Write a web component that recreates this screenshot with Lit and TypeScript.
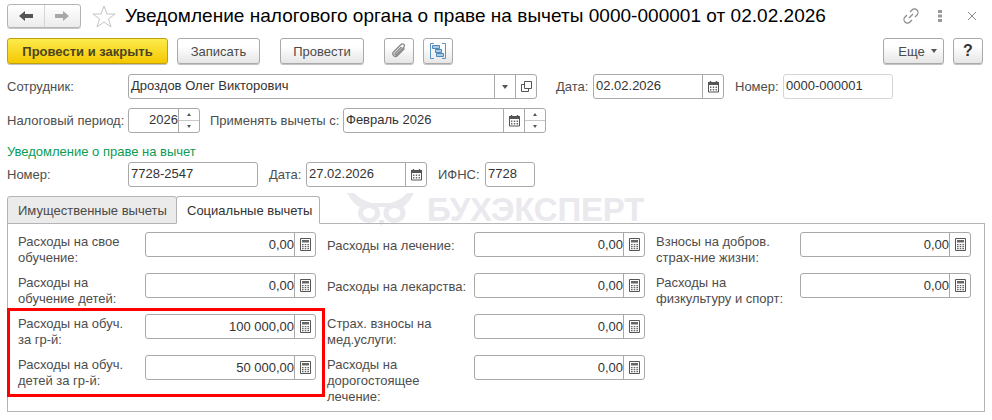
import { LitElement, html, css } from "lit";
import { customElement } from "lit/decorators.js";

const calendar = html`<svg class="ic" width="13" height="13" viewBox="0 0 13 13"><path d="M1.5 2.500h10v9.500h-10z" fill="#fff" stroke="#555"/><path d="M1 2h11v3H1z" fill="#555"/><path d="M3.500 1v2M9.500 1v2" stroke="#555" stroke-width="1.400"/><path d="M3 6.500h1.400v1.400H3zM5.800 6.500h1.400v1.400H5.800zM8.600 6.500H10v1.400H8.600zM3 9h1.400v1.400H3zM5.800 9h1.400v1.400H5.800zM8.600 9H10v1.400H8.600z" fill="#666"/></svg>`;
const calc = html`<svg class="ic" width="11" height="13" viewBox="0 0 11 13"><path d="M.5.5h10v12H.5z" fill="#fff" stroke="#555"/><path d="M2 2h7v2.500H2z" fill="#666"/><path d="M2 6h1.600v1.300H2zM4.700 6h1.600v1.300H4.700zM7.400 6H9v1.300H7.400zM2 8h1.600v1.300H2zM4.700 8h1.600v1.300H4.700zM7.400 8H9v1.300H7.400zM2 10h1.600v1.300H2zM4.700 10h1.600v1.300H4.700zM7.400 10H9v1.300H7.400z" fill="#666"/></svg>`;

const spin = html`<span class="spin"><span class="up"></span><span class="down"></span></span>`;

@customElement("app-root")
export class AppRoot extends LitElement {
  static styles = css`
    :host { display: block; width: 992px; height: 420px; background: #fff; position: relative; overflow: hidden;
      font-family: "Liberation Sans", Arial, sans-serif; font-size: 13px; color: #4d4d4d; }
    * { box-sizing: border-box; }
    .page { display: flex; flex-direction: column; padding: 4px 7px 0; position: relative; z-index: 1; }
    .head { display: flex; align-items: center; height: 24px; }
    .nav { display: flex; width: 74px; height: 24px; border: 1px solid #b4b4b4; border-radius: 3px;
      background: linear-gradient(#fff, #ececec); box-shadow: 0 1px 0 #c8c8c8; }
    .nav span { flex: 1; display: flex; align-items: center; justify-content: center; }
    .nav span + span { border-left: 1px solid #d5d5d5; }
    .star { margin-left: 11px; }
    .title { margin-left: 9px; font-size: 19px; color: #000; letter-spacing: .03px; white-space: nowrap; flex: 1; }
    .win { display: flex; align-items: center; gap: 0; }
    .win svg { display: block; }
    .bar { display: flex; margin-top: 10px; height: 26px; }
    .btn { display: flex; align-items: center; justify-content: center; height: 26px; border: 1px solid #a9a9a9; border-radius: 3px;
      background: linear-gradient(#fff 30%, #e6e6e6); box-shadow: 0 1px 0 #c4c4c4; color: #4a4a4a; white-space: nowrap; }
    .primary { width: 161px; background: linear-gradient(#fdeb4d, #f4c800); border-color: #bfa010; font-weight: bold; color: #4c4420; }
    .w83 { width: 83px; margin-left: 9px; }
    .w84 { width: 84px; margin-left: 20px; }
    .ico1 { width: 30px; margin-left: 20px; }
    .ico2 { width: 30px; margin-left: 9px; }
    .more { width: 61px; margin-left: auto; gap: 6px; padding-left: 8px; }
    .more i { border: 3px solid transparent; border-top: 4px solid #555; border-bottom: 0; display: block; }
    .help { width: 30px; margin: 0 2px 0 9px; font-weight: bold; font-size: 16px; color: #333; }
    .row { display: flex; align-items: center; height: 25px; white-space: nowrap; }
    .r1 { margin-top: 10px; }
    .r2 { margin-top: 9px; }
    .r3 { margin-top: 1px; }
    .green { margin-top: 9px; height: 19px; line-height: 19px; color: #0b9b55; }
    .lb { flex: none; }
    .field { flex: none; display: flex; height: 25px; border: 1px solid #a9a9a9; border-radius: 3px; background: #fff; color: #333; overflow: hidden; }
    .field.soft { border-color: #d4d4d4; }
    .val { flex: 1; min-width: 0; padding: 0 0 0 2px; line-height: 22px; }
    .val.right { text-align: right; }
    .seg { flex: none; width: 21px; border-left: 1px solid #a9a9a9; display: flex; align-items: center; justify-content: center; }
    .ic { display: block; }
    .tri { border: 3px solid transparent; border-top: 4px solid #555; border-bottom: 0; display: block; }
    .spin { flex: none; width: 21px; border-left: 1px solid #a9a9a9; display: flex; flex-direction: column; }
    .spin span { flex: 1; display: flex; align-items: center; justify-content: center; }
    .spin .down { border-top: 1px solid #c8c8c8; }
    .spin .up::after { content: ""; border: 2px solid transparent; border-bottom: 3px solid #555; border-top: 0; }
    .spin .down::after { content: ""; border: 2px solid transparent; border-top: 3px solid #555; border-bottom: 0; }
    .tabs { display: flex; margin-top: 9px; height: 27px; position: relative; z-index: 1; white-space: nowrap; }
    .tab { display: flex; align-items: center; height: 28px; border: 1px solid #b4b4b4; border-radius: 3px 3px 0 0; padding-left: 10px; color: #4a4a4a; }
    .tab.off { width: 170px; background: #ebebeb; }
    .tab.on { width: 144px; margin-left: -1px; background: #fff; border-bottom-color: #fff; color: #333; }
    .panel { width: 978px; height: 189px; border: 1px solid #b4b4b4; padding: 8px 0 0 10px;
      display: grid; grid-template-columns: 309px 329px 315px; }
    .col { display: grid; grid-auto-rows: 25px; row-gap: 16px; }
    .cell { display: flex; height: 25px; }
    .cell .lb { width: 127px; line-height: 16px; padding-top: 2px; white-space: nowrap; }
    .cell.c2 .lb { width: 147px; }
    .cell.c3 .lb { width: 144px; }
    .cell .lb.one { line-height: 27px; padding-top: 0; }
    .cell .field { width: 171px; }
    .cell .val { line-height: 24px; }
    .redbox { position: absolute; left: 7px; top: 308px; width: 318px; height: 89px; border: 3px solid #f00; z-index: 3; pointer-events: none; }
    .mark { position: absolute; left: 347px; top: 193px; height: 33px; display: flex; align-items: center; gap: 13px; color: #e9e9ee; font-weight: bold; font-size: 33px; letter-spacing: -.2px; line-height: 33px; z-index: 0; }
  `;

  private field(value: string, width: number, segs: unknown = "", opts: { right?: boolean; soft?: boolean } = {}) {
    return html`<div class="field ${opts.soft ? "soft" : ""}" style="width:${width}px"><span class="val ${opts.right ? "right" : ""}">${value}</span>${segs}</div>`;
  }

  private money(label: unknown, value: string, one = false, cls = "") {
    return html`<div class="cell ${cls}"><span class="lb ${one ? "one" : ""}">${label}</span>
      <div class="field"><span class="val right">${value}</span><span class="seg">${calc}</span></div></div>`;
  }

  render() {
    const calSeg = html`<span class="seg">${calendar}</span>`;
    return html`
      <div class="mark">
        <svg width="67" height="33" viewBox="0 0 67 33">
          <path d="M0 0H7C12 5 18 8 24 10H44C50 8 56 5 60 0H67C64 6 60 11 56 14H12C8 11 3 6 0 0Z" fill="#e9e9ee"/>
          <ellipse cx="22" cy="20" rx="8.500" ry="7.500" fill="#fff" stroke="#e9e9ee" stroke-width="5"/>
          <ellipse cx="47.500" cy="20" rx="8.500" ry="7.500" fill="#fff" stroke="#e9e9ee" stroke-width="5"/>
          <path d="M31 27L34.500 33L38 27Z" fill="#e9e9ee"/>
        </svg>
        <span>БУХЭКСПЕРТ</span>
      </div>
      <div class="page">
        <div class="head">
          <div class="nav">
            <span><svg width="14" height="10" viewBox="0 0 14 10"><path d="M0 5l6-5v3h8v4H6v3z" fill="#555"/></svg></span>
            <span><svg width="14" height="10" viewBox="0 0 14 10"><path d="M14 5L8 0v3H0v4h8v3z" fill="#a8a8a8"/></svg></span>
          </div>
          <svg class="star" width="24" height="23" viewBox="0 0 24 23"><path d="M12 1l3 8h8l-6.500 5 2.500 8-7-5-7 5 2.500-8L1 9h8z" fill="#fff" stroke="#c4c4c4"/></svg>
          <span class="title">Уведомление налогового органа о праве на вычеты 0000-000001 от 02.02.2026</span>
          <div class="win">
            <svg width="16" height="16" viewBox="0 0 16 16" fill="none" stroke="#8a8a8a" stroke-width="1.200"><path d="M6 10l4-4"/><path d="M7 4l2-2a3 3 0 0 1 5 5l-2 2"/><path d="M9 12l-2 2a3 3 0 0 1-5-5l2-2"/></svg>
            <svg style="margin-left:19px" width="4" height="12" viewBox="0 0 4 12"><path d="M0 0h4v3H0zM0 4.500h4v3H0zM0 9h4v3H0z" fill="#999"/></svg>
            <svg style="margin:0 9px 0 26px" width="8" height="8" viewBox="0 0 8 8"><path d="M0 0l8 8M8 0L0 8" stroke="#888" stroke-width="1"/></svg>
          </div>
        </div>
        <div class="bar">
          <div class="btn primary">Провести и закрыть</div>
          <div class="btn w83">Записать</div>
          <div class="btn w84">Провести</div>
          <div class="btn ico1"><svg width="16" height="16" viewBox="0 0 16 16" fill="none" stroke="#888" stroke-width="1.300"><path d="M13.500 5.500l-7 7a2.400 2.400 0 0 1-4-3.500l7.500-7.500a1.800 1.800 0 0 1 3 2.500L5.500 11.500a.8.8 0 0 1-1.300-1.200L10.500 4"/></svg></div>
          <div class="btn ico2"><svg width="16" height="16" viewBox="0 0 16 16"><path d="M4 .5H.5v15H4M12 .5h3.500v15H12" fill="none" stroke="#5a93c4"/><path d="M2.500 2.500h7v3h-7zM5.500 6.500h6v3h-6zM6.500 10.500h7v3h-7z" fill="#a9cbe6" stroke="#4f89bb"/></svg></div>
          <div class="btn more">Еще<i></i></div>
          <div class="btn help">?</div>
        </div>
        <div class="row r1">
          <span class="lb" style="width:121px">Сотрудник:</span>
          ${this.field("Дроздов Олег Викторович", 409, html`<span class="seg"><i class="tri"></i></span><span class="seg"><svg width="11" height="11" viewBox="0 0 11 11" fill="none" stroke="#555"><path d="M3.500.5h7v7h-7z"/><path d="M3 3.500H.5v7h7V8"/></svg></span>`)}
          <span class="lb" style="width:37px;margin-left:19px">Дата:</span>
          ${this.field("02.02.2026", 131, calSeg)}
          <span class="lb" style="width:48px;margin-left:11px">Номер:</span>
          ${this.field("0000-000001", 110, "", { soft: true })}
        </div>
        <div class="row r2">
          <span class="lb" style="width:121px">Налоговый период:</span>
          ${this.field("2026", 72, spin, { right: true })}
          <span class="lb" style="width:133px;margin-left:10px">Применять вычеты с:</span>
          ${this.field("Февраль 2026", 203, html`${calSeg}${spin}`)}
        </div>
        <div class="green">Уведомление о праве на вычет</div>
        <div class="row r3">
          <span class="lb" style="width:121px">Номер:</span>
          ${this.field("7728-2547", 130)}
          <span class="lb" style="width:37px;margin-left:11px">Дата:</span>
          ${this.field("27.02.2026", 121, calSeg)}
          <span class="lb" style="width:47px;margin-left:11px">ИФНС:</span>
          ${this.field("7728", 50)}
        </div>
        <div class="tabs">
          <div class="tab off">Имущественные вычеты</div>
          <div class="tab on">Социальные вычеты</div>
        </div>
        <div class="panel">
          <div class="col">
            ${this.money(html`Расходы на свое<br>обучение:`, "0,00")}
            ${this.money(html`Расходы на<br>обучение детей:`, "0,00")}
            ${this.money(html`Расходы на обуч.<br>за гр-й:`, "100 000,00")}
            ${this.money(html`Расходы на обуч.<br>детей за гр-й:`, "50 000,00")}
          </div>
          <div class="col">
            ${this.money("Расходы на лечение:", "0,00", true, "c2")}
            ${this.money("Расходы на лекарства:", "0,00", true, "c2")}
            ${this.money(html`Страх. взносы на<br>мед.услуги:`, "0,00", false, "c2")}
            ${this.money(html`Расходы на<br>дорогостоящее<br>лечение:`, "0,00", false, "c2")}
          </div>
          <div class="col">
            ${this.money(html`Взносы на добров.<br>страх-ние жизни:`, "0,00", false, "c3")}
            ${this.money(html`Расходы на<br>физкультуру и спорт:`, "0,00", false, "c3")}
          </div>
        </div>
      </div>
      <div class="redbox"></div>
    `;
  }
}
